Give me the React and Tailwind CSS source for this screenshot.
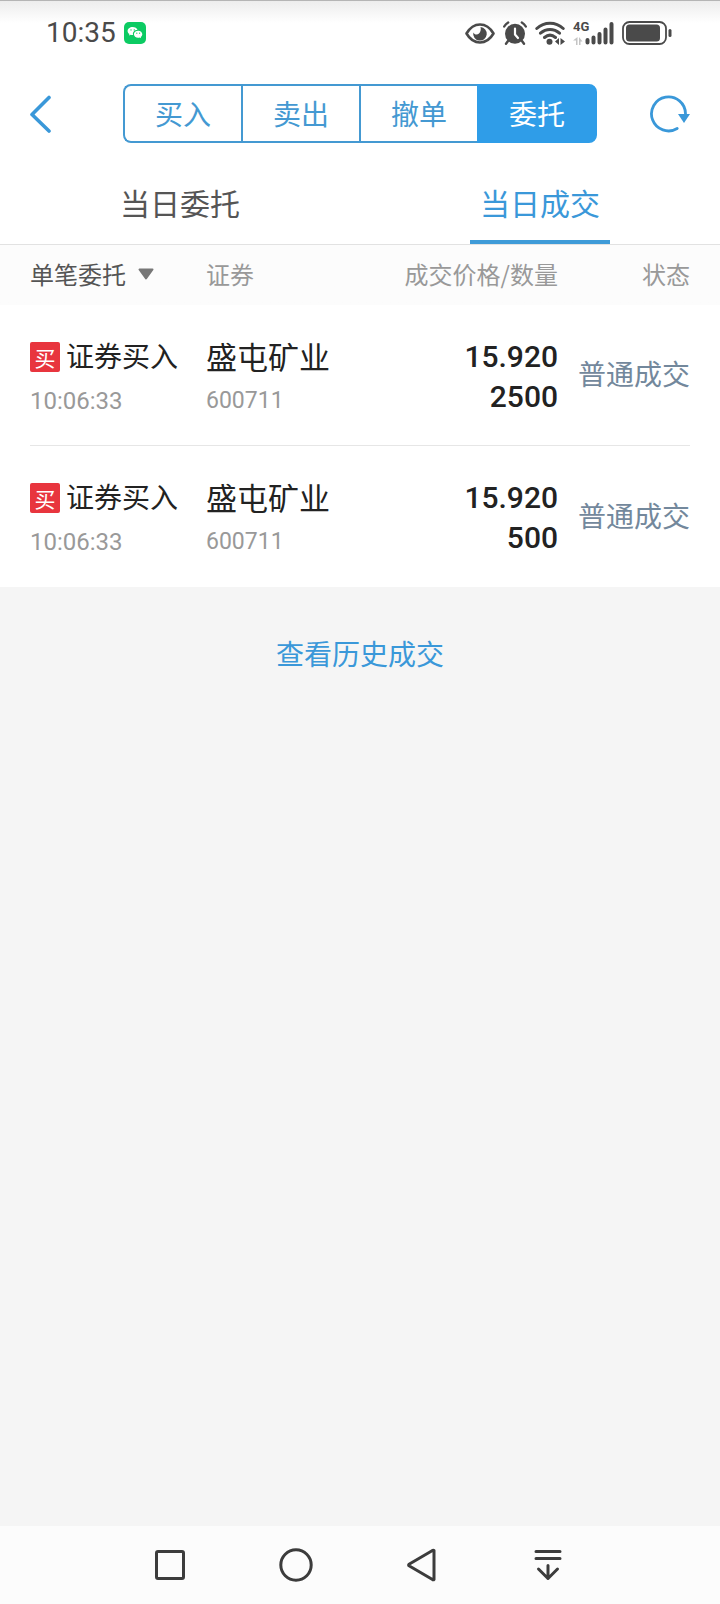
import React, { useState } from 'react';

const ACTIONS = ['买入', '卖出', '撤单', '委托'];
const TABS = ['当日委托', '当日成交'];

const TRADES = [
  { id: 1, side: '买', action: '证券买入', time: '10:06:33', name: '盛屯矿业', code: '600711', price: '15.920', amount: '2500', status: '普通成交' },
  { id: 2, side: '买', action: '证券买入', time: '10:06:33', name: '盛屯矿业', code: '600711', price: '15.920', amount: '500', status: '普通成交' },
];

function StatusBar() {
  return (
    <div className="flex items-center justify-between h-16 pl-[46px] pr-12 border-t border-[#b5b5b5] bg-linear-to-b from-[#ededed] to-white to-35% text-[#4a4a4a]">
      <div className="flex items-center gap-2">
        <span className="font-[Roboto] text-[28px] leading-8">10:35</span>
        <svg className="w-[22px] h-[22px]" viewBox="0 0 22 22">
          <rect width="22" height="22" rx="5" fill="#0ccb63" />
          <path d="M8.6 5C5.8 5 3.6 6.8 3.6 9c0 1.3.7 2.4 1.8 3.1l-.4 1.5 1.7-.9c.6.2 1.2.3 1.900.3h.5c-.9-3 1.500-5.100 4.400-5C13 6.200 11 5 8.600 5z" fill="#fff" />
          <path d="M14.200 8.700c-2.500 0-4.300 1.600-4.300 3.500s1.800 3.500 4.300 3.500c.5 0 1-.1 1.500-.2l1.400.8-.4-1.300c1-.7 1.600-1.600 1.600-2.800 0-1.900-1.800-3.500-4.100-3.500z" fill="#fff" />
          <g fill="#0ccb63">
            <circle cx="7" cy="7.900" r=".7" />
            <circle cx="10.300" cy="7.900" r=".7" />
            <circle cx="12.800" cy="11.200" r=".6" />
            <circle cx="15.600" cy="11.200" r=".6" />
          </g>
        </svg>
      </div>

      <div className="flex items-center gap-2">
        {/* Eye */}
        <svg className="w-[30px] h-6" viewBox="0 0 30 24" fill="none">
          <path d="M1.500 12.500C5 6.500 9.500 3.500 15 3.500s10 3 13.500 9C25 18.500 20.500 21.500 15 21.500S5 18.500 1.500 12.500z" stroke="currentColor" strokeWidth="2.600" strokeLinejoin="round" />
          <path d="M15.500 6a6.800 6.800 0 1 1-7.200 5.500c1 2.200 4 2.700 5.700 1 1.600-1.600 2.200-4 1.500-6.500z" fill="currentColor" />
        </svg>
        {/* Alarm */}
        <svg className="w-6 h-6" viewBox="0 0 24 24" fill="none" stroke="currentColor">
          <circle cx="12" cy="12.800" r="10" fill="currentColor" stroke="none" />
          <path d="M1.200 5.500C2.200 3.800 3.500 2.500 5.200 1.500M22.800 5.500c-1-1.700-2.300-3-4-4M5 20l-2 2.800M19 20l2 2.800" strokeWidth="2.400" strokeLinecap="round" />
          <path d="M12 7.500v6l3 3.500" stroke="#fff" strokeWidth="2.200" strokeLinecap="round" strokeLinejoin="round" />
        </svg>
        {/* Wifi */}
        <svg className="w-[30px] h-6" viewBox="0 0 30 24" fill="none">
          <path d="M1.800 7.500c7.500-7 18.900-7 26.400 0M5.500 12.200c5.500-5 13.500-5 19 0M9.500 16.500c3.500-3 7.500-3 11 0" stroke="currentColor" strokeWidth="3" strokeLinecap="round" />
          <circle cx="14.500" cy="20.800" r="3" fill="currentColor" />
          <path d="M24 17v7l-4-3.500zM25.500 24v-7l4.500 3.500z" fill="currentColor" />
        </svg>
        {/* Signal */}
        <div className="flex h-6">
          <div className="flex flex-col w-3">
            <span className="font-[Roboto] font-bold text-[13px] leading-3 whitespace-nowrap">4G</span>
            <svg className="w-[10px] h-2 mt-1" viewBox="0 0 10 8" fill="#c4c4c4">
              <path d="M4.500 0v8H3V3.500H0zM6 8V0l3.500 4.500H7.500V8z" />
            </svg>
          </div>
          <svg className="w-[29px] h-6" viewBox="0 0 29 24" stroke="currentColor" strokeWidth="4" strokeLinecap="round">
            <path d="M2.500 19v2.500M8.500 16.500v5M14.500 13v8.500M20.500 8.500v13M26.500 3v18.500" />
          </svg>
        </div>
        {/* Battery */}
        <svg className="w-[50px] h-6" viewBox="0 0 50 24" fill="none">
          <rect x="1" y="1" width="43" height="22" rx="6.500" stroke="currentColor" strokeWidth="1.800" />
          <rect x="4" y="3.500" width="34" height="17" rx="3.500" fill="currentColor" />
          <path d="M48 9.500v5" stroke="currentColor" strokeWidth="3" strokeLinecap="round" />
        </svg>
      </div>
    </div>
  );
}

function Header({ active, onChange }) {
  return (
    <header className="flex items-center justify-between h-[99px] px-[30px]">
      <button aria-label="返回" className="w-[93px] text-[#3a98d9]">
        <svg className="w-[22px] h-[38px]" viewBox="0 0 22 38" fill="none" stroke="currentColor" strokeWidth="3.600" strokeLinecap="round" strokeLinejoin="round">
          <path d="M19 2.500L2 19.500l17 16.500" />
        </svg>
      </button>
      <div className="flex flex-1 h-[59px] max-w-[474px]">
        {ACTIONS.map((a) => (
          <button
            key={a}
            onClick={() => onChange(a)}
            className={`flex-1 pb-0.5 border-y-2 border-l-2 first:rounded-l-lg last:rounded-r-lg last:border-r-2 text-[28px] leading-8 ${active === a ? 'bg-[#2f9de8] text-white border-[#2f9de8]' : 'bg-white text-[#4499d2] border-[#4499d2]'}`}
          >
            {a}
          </button>
        ))}
      </div>
      <button aria-label="刷新" className="flex justify-end w-[93px] text-[#3a98d9]">
        <svg className="w-10 h-[38px]" viewBox="0 0 40 38" fill="none">
          <path d="M27.200 33.500A17 17 0 1 1 35.500 19" stroke="currentColor" strokeWidth="2.800" strokeLinecap="round" />
          <path d="M28 19h12l-6 9z" fill="currentColor" />
        </svg>
      </button>
    </header>
  );
}

function TradeRow({ trade, last }) {
  const line = last ? '' : 'border-b border-[#e6e6e6]';
  return (
    <tr className="h-[141px]">
      <td className={`align-top pt-8 ${line}`}>
        <div className="flex items-center gap-1.5 h-10">
          <span className="flex items-center justify-center w-[30px] h-[30px] rounded-xs bg-[#e8353e] text-white text-[21px] leading-6">
            {trade.side}
          </span>
          <span className="self-start text-[28px] leading-9 text-[#222]">{trade.action}</span>
        </div>
        <div className="mt-2 font-[Roboto] text-[24px] leading-8 text-[#999]">{trade.time}</div>
      </td>
      <td className={`align-top pt-8 ${line}`}>
        <div className="text-[31px] leading-[38px] text-[#222]">{trade.name}</div>
        <div className="mt-2.5 font-[Roboto] text-[23px] leading-8 text-[#999]">{trade.code}</div>
      </td>
      <td className={`align-top pt-8 text-right font-[Roboto] font-medium text-[30px] leading-10 text-[#222] ${line}`}>
        <div>{trade.price}</div>
        <div>{trade.amount}</div>
      </td>
      <td className={`pb-1 text-right text-[28px] leading-10 text-[#73889c] ${line}`}>{trade.status}</td>
    </tr>
  );
}

function NavBar() {
  return (
    <nav className="flex items-center justify-center gap-[86px] h-[78px] pr-0.5 bg-[#fcfcfc] text-[#3c3c3c]">
      <button aria-label="最近任务">
        <svg className="w-10 h-10" viewBox="0 0 40 40" fill="none" stroke="currentColor" strokeWidth="3">
          <rect x="6.500" y="6.500" width="27" height="27" rx="1.500" />
        </svg>
      </button>
      <button aria-label="主屏幕">
        <svg className="w-10 h-10" viewBox="0 0 40 40" fill="none" stroke="currentColor" strokeWidth="3">
          <circle cx="20" cy="20" r="15.200" />
        </svg>
      </button>
      <button aria-label="返回上一级">
        <svg className="w-10 h-10" viewBox="0 0 40 40" fill="none" stroke="currentColor" strokeWidth="3" strokeLinejoin="round">
          <path d="M32 5.500v29a1 1 0 0 1-1.500 0L7 20.800a1 1 0 0 1 0-1.600L30.500 5.500a1 1 0 0 1 1.500 0z" />
        </svg>
      </button>
      <button aria-label="收起导航栏">
        <svg className="w-10 h-10" viewBox="0 0 40 40" fill="none" stroke="currentColor" strokeWidth="3" strokeLinecap="round" strokeLinejoin="round">
          <path d="M8 6.500h24M8 13.500h24M20 20.500v13M10.500 24l9.500 9.500 9.500-9.500" />
        </svg>
      </button>
    </nav>
  );
}

export default function App() {
  const [action, setAction] = useState('委托');
  const [tab, setTab] = useState('当日成交');

  return (
    <div className="flex flex-col min-h-screen bg-[#f5f5f5] font-['Noto_Sans_CJK_SC',sans-serif]">
      <div className="bg-white">
        <StatusBar />
        <Header active={action} onChange={setAction} />

        {/* Tabs */}
        <div className="flex h-[82px] border-b border-[#e2e2e2]">
          {TABS.map((t) => (
            <button key={t} onClick={() => setTab(t)} className="flex flex-1 justify-center">
              <span
                className={`flex items-center h-[81px] px-[10px] text-[30px] leading-10 border-b-4 ${tab === t ? 'text-[#3a98d9] border-[#3f9bd8]' : 'text-[#555] border-transparent'}`}
              >
                {t}
              </span>
            </button>
          ))}
        </div>

        {/* Trades */}
        <div className="px-[30px] bg-linear-to-b from-[#fcfcfc] from-[60px] to-white to-[60px]">
          <table className="w-full table-fixed border-separate border-spacing-0">
            <thead>
              <tr className="h-[60px] text-[24px] leading-8 text-[#999]">
                <th className="w-4/15 pb-0.5 text-left font-normal">
                  <button className="flex items-center gap-3 text-[#555]">
                    单笔委托
                    <svg className="w-4 h-3" viewBox="0 0 16 12" fill="#777" stroke="#777" strokeWidth="2" strokeLinejoin="round">
                      <path d="M1.500 1.500h13L8 10.500z" />
                    </svg>
                  </button>
                </th>
                <th className="w-[23%] pb-0.5 text-left font-normal">证券</th>
                <th className="pb-0.5 text-right font-normal">成交价格/数量</th>
                <th className="w-1/5 pb-0.5 text-right font-normal">状态</th>
              </tr>
            </thead>
            <tbody>
              {TRADES.map((t, i) => (
                <TradeRow key={t.id} trade={t} last={i === TRADES.length - 1} />
              ))}
            </tbody>
          </table>
        </div>
      </div>

      <div className="flex-1 pt-[46px] text-center">
        <a href="#history" className="text-[28px] leading-10 text-[#3a98d9]">查看历史成交</a>
      </div>

      <NavBar />
    </div>
  );
}
